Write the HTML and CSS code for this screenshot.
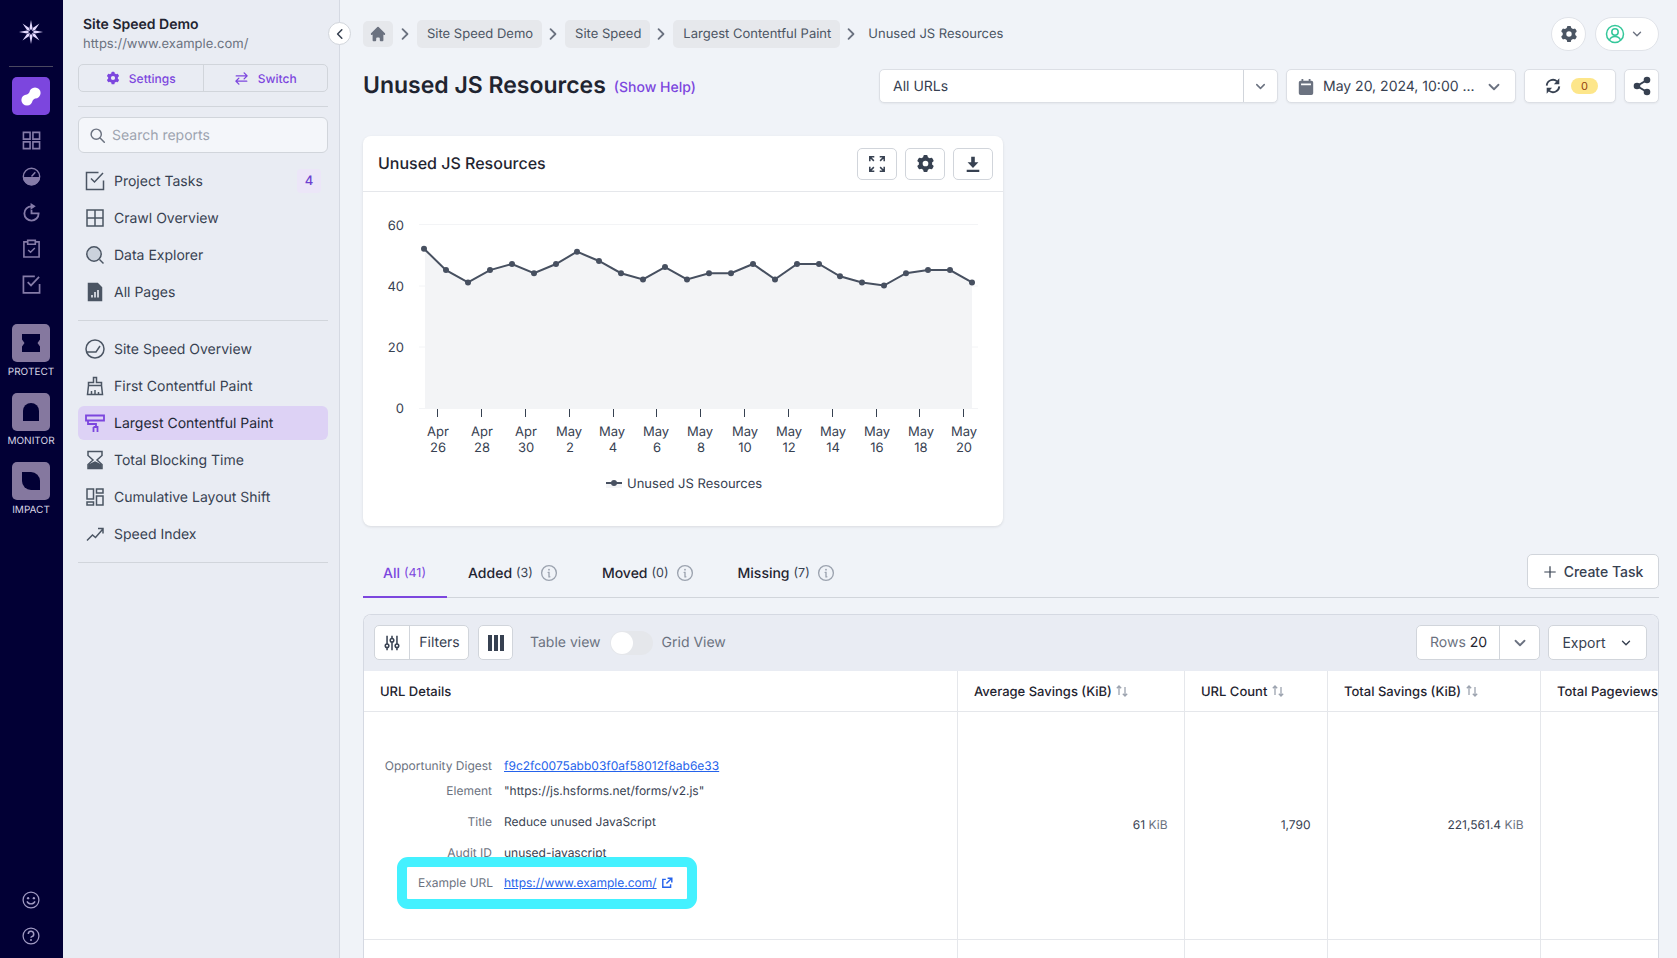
FILE: index.html
```html
<!DOCTYPE html>
<html>
<head>
  <title>Unused JS Resources</title>
  <meta name="viewport" content="width=device-width, initial-scale=1.0">
  <link rel="stylesheet" href="styles.css">
</head>
<body>
  <svg class="sprite" aria-hidden="true">
    <symbol id="i-gear" viewBox="0 0 20 20"><path fill="currentColor" fill-rule="evenodd" d="M7.84 1.804A1 1 0 018.82 1h2.36a1 1 0 01.98.804l.331 1.652a6.993 6.993 0 011.929 1.115l1.598-.54a1 1 0 011.186.447l1.18 2.044a1 1 0 01-.205 1.251l-1.267 1.113a7.047 7.047 0 010 2.228l1.267 1.113a1 1 0 01.206 1.25l-1.18 2.045a1 1 0 01-1.187.447l-1.598-.54a6.993 6.993 0 01-1.929 1.115l-.33 1.652a1 1 0 01-.98.804H8.82a1 1 0 01-.98-.804l-.331-1.652a6.993 6.993 0 01-1.929-1.115l-1.598.54a1 1 0 01-1.186-.447l-1.18-2.044a1 1 0 01.205-1.251l1.267-1.114a7.05 7.05 0 010-2.227L1.821 7.773a1 1 0 01-.206-1.25l1.18-2.045a1 1 0 011.187-.447l1.598.54A6.993 6.993 0 017.51 3.456l.33-1.652zM10 13a3 3 0 100-6 3 3 0 000 6z"/></symbol>
    <symbol id="i-chev-down" viewBox="0 0 20 20"><path fill="none" stroke="currentColor" stroke-width="2" stroke-linecap="round" stroke-linejoin="round" d="M5 7.5l5 5 5-5"/></symbol>
    <symbol id="i-chev-right" viewBox="0 0 20 20"><path fill="none" stroke="currentColor" stroke-width="2.6" stroke-linecap="round" stroke-linejoin="round" d="M6.5 3l7 7-7 7"/></symbol>
    <symbol id="i-info" viewBox="0 0 20 20"><circle cx="10" cy="10" r="8.2" fill="none" stroke="currentColor" stroke-width="1.5"/><circle cx="10" cy="6.3" r="1" fill="currentColor"/><path fill="none" stroke="currentColor" stroke-width="1.5" stroke-linecap="round" d="M9 9.3h1v5h1"/></symbol>
    <symbol id="i-sort" viewBox="0 0 14 14"><path fill="none" stroke="#9ca3af" stroke-width="1.3" d="M4 11V2M1.8 4.2L4 2l2.2 2.2"/><path fill="none" stroke="#9ca3af" stroke-width="1.3" d="M10 3v9M7.8 9.8L10 12l2.2-2.2"/></symbol>
  </svg>

  <nav class="rail">
    <svg class="rail-logo" viewBox="0 0 24 24" fill="#e4d8ff">
      <path d="M12 0l1.5 8L12 10.5 10.5 8z"/>
      <path d="M12 0l1.5 8L12 10.5 10.5 8z" transform="rotate(45 12 12)"/>
      <path d="M12 0l1.5 8L12 10.5 10.5 8z" transform="rotate(90 12 12)"/>
      <path d="M12 0l1.5 8L12 10.5 10.5 8z" transform="rotate(135 12 12)"/>
      <path d="M12 0l1.5 8L12 10.5 10.5 8z" transform="rotate(180 12 12)"/>
      <path d="M12 0l1.5 8L12 10.5 10.5 8z" transform="rotate(225 12 12)"/>
      <path d="M12 0l1.5 8L12 10.5 10.5 8z" transform="rotate(270 12 12)"/>
      <path d="M12 0l1.5 8L12 10.5 10.5 8z" transform="rotate(315 12 12)"/>
    </svg>
    <div class="rail-divider"></div>
    <div class="rail-active">
      <svg viewBox="0 0 38 38" width="38" height="38"><path d="M15 23l8-7" stroke="#fff" stroke-width="8" fill="none"/><circle cx="15" cy="23" r="5.6" fill="#fff"/><circle cx="23" cy="16" r="5.6" fill="#fff"/></svg>
    </div>
    <div class="rail-icons">
      <svg viewBox="0 0 20 20"><path fill="none" stroke="currentColor" stroke-width="1.7" d="M1.5 1.5h7v7h-7zM11.5 1.5h7v7h-7zM1.5 11.5h7v7h-7zM11.5 11.5h7v7h-7z"/></svg>
      <svg viewBox="0 0 20 20"><circle cx="10" cy="10" r="8.6" fill="none" stroke="currentColor" stroke-width="1.5"/><path fill="currentColor" d="M1 10.5h18a9 9 0 01-18 0z"/><path fill="none" stroke="currentColor" stroke-width="1.6" d="M10 10l4-4.5"/></svg>
      <svg viewBox="0 0 20 20"><path fill="none" stroke="currentColor" stroke-width="1.9" d="M10 3.500A7.500 7.500 0 1017.500 11H10V7"/><path fill="currentColor" d="M9 0l5.500 3.500L9 7z"/></svg>
      <svg viewBox="0 0 20 20"><path fill="none" stroke="currentColor" stroke-width="1.7" d="M6 3H2v16h16V3h-4M6 1.5h8v4H6z"/><path fill="none" stroke="currentColor" stroke-width="1.5" d="M6.5 11.5l2.5 2.5 4.5-4.5"/></svg>
      <svg viewBox="0 0 20 20"><path fill="none" stroke="currentColor" stroke-width="1.8" d="M18.5 9.5v9.4h-17V1.5h12"/><path fill="none" stroke="currentColor" stroke-width="1.8" d="M6 7.5l3.5 3.5 8.5-9"/></svg>
    </div>
    <div class="product">
      <div class="product-tile"><svg viewBox="0 0 20 20"><path d="M1 1h18v5.500L16.500 10l2.500 3.500V19H1v-5.500L3.500 10 1 6.500z"/></svg></div>
      <span>PROTECT</span>
    </div>
    <div class="product">
      <div class="product-tile"><svg viewBox="0 0 20 20"><path d="M2 19V9a8 8 0 0116 0v10z"/></svg></div>
      <span>MONITOR</span>
    </div>
    <div class="product">
      <div class="product-tile"><svg viewBox="0 0 20 20"><path d="M1 1h9a9 9 0 019 9v9h-9a9 9 0 01-9-9z"/></svg></div>
      <span>IMPACT</span>
    </div>
    <div class="rail-bottom">
      <svg viewBox="0 0 20 20"><circle cx="10" cy="10" r="8.800" fill="none" stroke="currentColor" stroke-width="1.400"/><circle cx="6.800" cy="8" r="1.300" fill="currentColor"/><circle cx="13.200" cy="8" r="1.300" fill="currentColor"/><path fill="none" stroke="currentColor" stroke-width="1.500" d="M5.500 11.500a5 5 0 009 0"/></svg>
      <svg viewBox="0 0 20 20"><circle cx="10" cy="10" r="8.800" fill="none" stroke="currentColor" stroke-width="1.400"/><path fill="none" stroke="currentColor" stroke-width="1.700" d="M7 7.800a3 3 0 113.800 2.900c-.6.200-.8.600-.8 1.300"/><circle cx="10" cy="14.500" r="1.100" fill="currentColor"/></svg>
    </div>
  </nav>

  <aside class="sidebar">
    <button class="collapse"><svg viewBox="0 0 20 20" width="12" height="12"><path fill="none" stroke="#374151" stroke-width="2.600" stroke-linecap="round" stroke-linejoin="round" d="M13 3l-7 7 7 7"/></svg></button>
    <div class="project">
      <div class="project-name">Site Speed Demo</div>
      <div class="project-url">https://www.example.com/</div>
    </div>
    <div class="side-actions">
      <a class="side-action"><svg width="14" height="14"><use href="#i-gear"/></svg>Settings</a>
      <a class="side-action"><svg viewBox="0 0 20 20" width="15" height="15"><path fill="none" stroke="currentColor" stroke-width="1.800" stroke-linecap="round" stroke-linejoin="round" d="M3 6.500h14M13.500 2.500l4 4-4 4M17 13.500H3M6.500 9.500l-4 4 4 4"/></svg>Switch</a>
    </div>
    <div class="side-divider first"></div>
    <div class="search">
      <svg viewBox="0 0 20 20" width="17" height="17"><circle cx="8.500" cy="8.500" r="6" fill="none" stroke="#6b7280" stroke-width="1.700"/><path stroke="#6b7280" stroke-width="1.800" stroke-linecap="round" d="M13 13l5 5"/></svg>
      <span>Search reports</span>
    </div>
    <ul class="nav-list">
      <li class="nav-item">
        <svg viewBox="0 0 20 20"><path d="M18.500 9.500v9h-17v-17h12M6 7.500l3.500 3.500 8.500-9"/></svg>
        Project Tasks<span class="badge">4</span>
      </li>
      <li class="nav-item">
        <svg viewBox="0 0 20 20"><path d="M2 2h16v16H2zM10 2v16M2 10h16"/></svg>
        Crawl Overview
      </li>
      <li class="nav-item">
        <svg viewBox="0 0 20 20"><circle cx="9" cy="9" r="7.200" fill="#cbd2dc"/><path d="M14.500 14.500l4 4"/></svg>
        Data Explorer
      </li>
      <li class="nav-item">
        <svg viewBox="0 0 20 20"><path class="solid" d="M3.500 1.500h9l4 4v13h-13z"/><path class="bars" d="M7 15.500v-2.500M10 15.500V10M13 15.500V8"/></svg>
        All Pages
      </li>
    </ul>
    <div class="side-divider"></div>
    <ul class="nav-list">
      <li class="nav-item">
        <svg viewBox="0 0 20 20"><circle cx="10" cy="10" r="9"/><path d="M1 13h10l4-6"/></svg>
        Site Speed Overview
      </li>
      <li class="nav-item">
        <svg viewBox="0 0 20 20"><path d="M8.500 1.500h3v5h5v3h-13v-3h5zM3.500 9.500h13l1 9h-15zM6.500 18v-3M10 18v-4M13.500 18v-2"/></svg>
        First Contentful Paint
      </li>
      <li class="nav-item active">
        <svg viewBox="0 0 20 20"><path d="M1 2.500h18v5H1zM3 7.500v3.500h8v3M8.500 14h4v5M8.500 14v5"/></svg>
        Largest Contentful Paint
      </li>
      <li class="nav-item">
        <svg viewBox="0 0 20 20"><path d="M3 1.500h14v4L12 10l5 4.500v4H3v-4L8 10 3 5.500z"/><path class="solid" d="M4 17.500v-2.500l6-3 6 3v2.500z"/></svg>
        Total Blocking Time
      </li>
      <li class="nav-item">
        <svg viewBox="0 0 20 20"><path d="M2 2h6.500v10H2zM11.500 2H18v4h-6.500zM11.500 9H18v9h-6.500zM2 15h6.500v3H2z"/></svg>
        Cumulative Layout Shift
      </li>
      <li class="nav-item">
        <svg viewBox="0 0 20 20"><path d="M2 16.500l5.500-5.500 3 2.500 7-8M13 4.500h5v5"/></svg>
        Speed Index
      </li>
    </ul>
    <div class="side-divider"></div>
  </aside>

  <main class="main">
    <header class="topbar">
      <div class="crumbs">
        <a class="crumb home"><svg viewBox="0 0 20 20" width="18" height="18"><path fill="#6b7280" d="M10.707 2.293a1 1 0 00-1.414 0l-7 7a1 1 0 001.414 1.414L4 10.414V17a1 1 0 001 1h2a1 1 0 001-1v-2a1 1 0 011-1h2a1 1 0 011 1v2a1 1 0 001 1h2a1 1 0 001-1v-6.586l.293.293a1 1 0 001.414-1.414l-7-7z"/></svg></a>
        <svg class="crumb-sep"><use href="#i-chev-right"/></svg>
        <a class="crumb">Site Speed Demo</a>
        <svg class="crumb-sep"><use href="#i-chev-right"/></svg>
        <a class="crumb">Site Speed</a>
        <svg class="crumb-sep"><use href="#i-chev-right"/></svg>
        <a class="crumb">Largest Contentful Paint</a>
        <svg class="crumb-sep"><use href="#i-chev-right"/></svg>
        <span class="crumb-last">Unused JS Resources</span>
      </div>
      <div class="top-actions">
        <button class="round-btn"><svg width="18" height="18"><use href="#i-gear"/></svg></button>
        <button class="round-btn user">
          <svg viewBox="0 0 20 20" width="20" height="20" fill="none" stroke="#34c79a" stroke-width="1.500"><circle cx="10" cy="10" r="8.500"/><circle cx="10" cy="8" r="3.200"/><path d="M4.500 16c1-2.500 3-3.500 5.500-3.500s4.500 1 5.500 3.500"/></svg>
          <svg class="user-chev" width="14" height="14"><use href="#i-chev-down"/></svg>
        </button>
      </div>
    </header>

    <div class="page-head">
      <div class="page-title">
        <h1>Unused JS Resources</h1>
        <a class="help-link">(Show Help)</a>
      </div>
      <div class="page-controls">
        <div class="control url-select">
          <span class="url-value">All URLs</span>
          <span class="url-caret"><svg width="15" height="15"><use href="#i-chev-down"/></svg></span>
        </div>
        <div class="control date-select">
          <svg viewBox="0 0 20 20" width="18" height="18"><path fill="#6b7280" d="M5 1h2v2h6V1h2v2h1a2 2 0 012 2v12a2 2 0 01-2 2H4a2 2 0 01-2-2V5a2 2 0 012-2h1zM4.500 6v2h11V6z"/></svg>
          <span class="date-value">May 20, 2024, 10:00 ...</span>
          <svg class="date-caret" width="18" height="18"><use href="#i-chev-down"/></svg>
        </div>
        <div class="control refresh">
          <svg viewBox="0 0 20 20" width="18" height="18" fill="none" stroke="#374151" stroke-width="2"><path d="M3 9.500a7 7 0 0111.500-4.700M17 10.500a7 7 0 01-11.500 4.700"/><path fill="#374151" stroke="none" d="M17 1.500V8h-6zM3 18.500V12h6z"/></svg>
          <span class="count">0</span>
        </div>
        <div class="control share">
          <svg viewBox="0 0 20 20" width="20" height="20"><path fill="none" stroke="#374151" stroke-width="2" d="M15 4L5 10l10 6"/><circle cx="15" cy="4" r="3.300" fill="#374151"/><circle cx="5" cy="10" r="3.300" fill="#374151"/><circle cx="15" cy="16" r="3.300" fill="#374151"/></svg>
        </div>
      </div>
    </div>

    <section class="card">
      <div class="card-head">
        <h2>Unused JS Resources</h2>
        <div class="card-tools">
          <button class="tool-btn"><svg viewBox="0 0 20 20" width="18" height="18" fill="none" stroke="#374151" stroke-width="1.700"><path d="M2 7V2h5M18 7V2h-5M2 13v5h5M18 13v5h-5M2 2l4.500 4.500M18 2l-4.500 4.500M2 18l4.500-4.500M18 18l-4.500-4.500"/></svg></button>
          <button class="tool-btn"><svg width="19" height="19"><use href="#i-gear"/></svg></button>
          <button class="tool-btn"><svg viewBox="0 0 20 20" width="18" height="18" fill="#374151"><path d="M8 2h4v6h4l-6 6.500L4 8h4zM3 16.500h14V19H3z"/></svg></button>
        </div>
      </div>
      <svg class="chart" viewBox="363 192 640 334" width="640" height="334">
        <defs>
          <marker id="dot" markerUnits="userSpaceOnUse" markerWidth="8" markerHeight="8" refX="4" refY="4"><circle cx="4" cy="4" r="3" fill="#475060"/></marker>
        </defs>
        <path class="grid-line" d="M419 224.500H978M419 286H978M419 347H978M419 408.500H978"/>
        <polygon class="area" points="425,408 425,248.700 446,270.100 468,282.400 490,270.100 512,264 534,273.200 556,264 577,251.700 599,261 621,273.200 643,279.400 665,267.100 687,279.400 709,273.200 731,273.200 753,264 775,279.400 797,264 819,264 840,276.300 862,282.400 884,285.500 906,273.200 928,270.100 950,270.100 972,282.400 972,408"/>
        <polyline class="line" marker-start="url(#dot)" marker-mid="url(#dot)" marker-end="url(#dot)" points="424,248.700 446,270.100 468,282.400 490,270.100 512,264 534,273.200 556,264 577,251.700 599,261 621,273.200 643,279.400 665,267.100 687,279.400 709,273.200 731,273.200 753,264 775,279.400 797,264 819,264 840,276.300 862,282.400 884,285.500 906,273.200 928,270.100 950,270.100 972,282.400"/>
        <path class="tick" d="M437.500 409v8M481.500 409v8M525.500 409v8M569.500 409v8M613.500 409v8M656.500 409v8M700.500 409v8M744.500 409v8M788.500 409v8M832.500 409v8M876.500 409v8M919.500 409v8M963.500 409v8"/>
        <g class="y-labels">
          <text x="404" y="229.500">60</text>
          <text x="404" y="291">40</text>
          <text x="404" y="352">20</text>
          <text x="404" y="413">0</text>
        </g>
        <g class="x-labels">
          <text x="438" y="435.500">Apr</text><text x="438" y="451.500">26</text>
          <text x="482" y="435.500">Apr</text><text x="482" y="451.500">28</text>
          <text x="526" y="435.500">Apr</text><text x="526" y="451.500">30</text>
          <text x="569" y="435.500">May</text><text x="570" y="451.500">2</text>
          <text x="612" y="435.500">May</text><text x="613" y="451.500">4</text>
          <text x="656" y="435.500">May</text><text x="657" y="451.500">6</text>
          <text x="700" y="435.500">May</text><text x="701" y="451.500">8</text>
          <text x="745" y="435.500">May</text><text x="745" y="451.500">10</text>
          <text x="789" y="435.500">May</text><text x="789" y="451.500">12</text>
          <text x="833" y="435.500">May</text><text x="833" y="451.500">14</text>
          <text x="877" y="435.500">May</text><text x="877" y="451.500">16</text>
          <text x="921" y="435.500">May</text><text x="921" y="451.500">18</text>
          <text x="964" y="435.500">May</text><text x="964" y="451.500">20</text>
        </g>
        <rect class="area" x="606" y="483" width="16" height="5"/>
        <path class="line" d="M606 483h16"/>
        <circle cx="614" cy="483" r="3" fill="#475060"/>
        <text class="legend" x="627" y="488">Unused JS Resources</text>
      </svg>
    </section>

    <div class="tabs-row">
      <div class="tabs">
        <a class="tab active">All <small>(41)</small></a>
        <a class="tab">Added <small>(3)</small><svg class="tab-info"><use href="#i-info"/></svg></a>
        <a class="tab">Moved <small>(0)</small><svg class="tab-info"><use href="#i-info"/></svg></a>
        <a class="tab">Missing <small>(7)</small><svg class="tab-info"><use href="#i-info"/></svg></a>
      </div>
      <button class="create-task"><svg viewBox="0 0 16 16" width="14" height="14"><path stroke="#374151" stroke-width="1.400" d="M8 1.500v13M1.500 8h13"/></svg>Create Task</button>
    </div>

    <section class="panel">
      <div class="toolbar">
        <div class="btn-group filters">
          <span class="group-icon"><svg viewBox="0 0 20 20" width="18" height="18" fill="none" stroke="#374151" stroke-width="1.700"><path d="M4.500 2v16M10 2v16M15.500 2v16"/><circle cx="4.500" cy="13" r="2" fill="#fff"/><circle cx="10" cy="7" r="2" fill="#fff"/><circle cx="15.500" cy="13" r="2" fill="#fff"/></svg></span>
          <span class="group-label">Filters</span>
        </div>
        <button class="col-btn"><svg viewBox="0 0 16 16" width="16" height="16" fill="#374151"><path d="M0 0h4v16H0zM6 0h4v16H6zM12 0h4v16h-4z"/></svg></button>
        <span class="view-label">Table view</span>
        <span class="toggle"><span class="knob"></span></span>
        <span class="view-label">Grid View</span>
        <div class="toolbar-right">
          <div class="btn-group rows">
            <span class="rows-label">Rows <b>20</b></span>
            <span class="rows-caret"><svg width="18" height="18"><use href="#i-chev-down"/></svg></span>
          </div>
          <button class="export">Export<svg width="14" height="14"><use href="#i-chev-down"/></svg></button>
        </div>
      </div>
      <table class="data-table">
        <colgroup>
          <col class="col-url"><col class="col-avg"><col class="col-count"><col class="col-total"><col class="col-views">
        </colgroup>
        <thead>
          <tr>
            <th>URL Details</th>
            <th>Average Savings (KiB) <svg class="sort"><use href="#i-sort"/></svg></th>
            <th>URL Count <svg class="sort"><use href="#i-sort"/></svg></th>
            <th>Total Savings (KiB) <svg class="sort"><use href="#i-sort"/></svg></th>
            <th>Total Pageviews</th>
          </tr>
        </thead>
        <tbody>
          <tr class="detail-row">
            <td>
              <dl class="details">
                <dt>Opportunity Digest</dt><dd><a>f9c2fc0075abb03f0af58012f8ab6e33</a></dd>
                <dt>Element</dt><dd>"https://js.hsforms.net/forms/v2.js"</dd>
                <dt>Title</dt><dd>Reduce unused JavaScript</dd>
                <dt>Audit ID</dt><dd>unused-javascript</dd>
              </dl>
              <div class="highlight">
                <span class="hl-label">Example URL</span>
                <a>https://www.example.com/</a>
                <svg viewBox="0 0 20 20" width="12" height="12" fill="none" stroke="#2563eb" stroke-width="2.400"><path d="M8 4H3v13h13v-5M11 2h7v7M18 2L9 11"/></svg>
              </div>
            </td>
            <td class="num">61 <small>KiB</small></td>
            <td class="num">1,790</td>
            <td class="num">221,561.4 <small>KiB</small></td>
            <td></td>
          </tr>
          <tr class="next-row"><td></td><td></td><td></td><td></td><td></td></tr>
        </tbody>
      </table>
    </section>
  </main>
</body>
</html>
```

FILE: styles.css
```css
* {
  box-sizing: border-box;
}

html, body {
  height: 100%;
}

body {
  margin: 0;
  display: flex;
  overflow: hidden;
  font-family: Inter, "Noto Sans", sans-serif;
  font-size: 14px;
  color: #374151;
  background-color: #f0f3f8;
  text-rendering: geometricPrecision;
}

button {
  font-family: inherit;
  padding: 0;
  cursor: pointer;
}

ul {
  list-style: none;
  margin: 0;
  padding: 0;
}

.sprite {
  position: absolute;
  width: 0;
  height: 0;
}

/* Far left rail */
.rail {
  flex: 0 0 63px;
  display: flex;
  flex-direction: column;
  align-items: center;
  background-color: #020035;
  color: #857ba8;
  padding: 20px 1px 0 0;
}

.rail-logo {
  width: 24px;
  height: 24px;
}

.rail-divider {
  width: 44px;
  height: 1px;
  background-color: #4a4860;
  margin-top: 22px;
}

.rail-active {
  width: 38px;
  height: 38px;
  margin-top: 10px;
  border-radius: 5px;
  background-color: #7c46de;
}

.rail-icons {
  display: flex;
  flex-direction: column;
  gap: 17px;
  margin-top: 16px;
  margin-bottom: 23px;
}

.rail-icons svg {
  display: block;
  width: 19px;
  height: 19px;
}

.product {
  display: flex;
  flex-direction: column;
  align-items: center;
  gap: 4px;
  margin-top: 7px;
  margin-bottom: 7px;
  color: #d6d4e4;
  font-size: 10px;
  line-height: 13px;
}

.product-tile {
  display: flex;
  align-items: center;
  justify-content: center;
  width: 38px;
  height: 38px;
  border-radius: 5px;
  background-color: #85789f;
}

.product-tile svg {
  width: 20px;
  height: 20px;
  fill: #020035;
}

.rail-bottom {
  display: flex;
  flex-direction: column;
  gap: 18px;
  margin-top: auto;
  margin-bottom: 13px;
  color: #a29bc4;
}

.rail-bottom svg {
  display: block;
  width: 18px;
  height: 18px;
}

/* Project sidebar */
.sidebar {
  position: relative;
  flex: 0 0 277px;
  padding: 15px 11px 0 15px;
  background-color: #e9ecf3;
  border-right: 1px solid #d5d9e2;
}

.collapse {
  position: absolute;
  top: 22px;
  right: -12px;
  z-index: 2;
  display: flex;
  align-items: center;
  justify-content: center;
  width: 23px;
  height: 23px;
  border-radius: 50%;
  border: 1px solid #d1d5db;
  background-color: #fff;
}

.project {
  padding-left: 5px;
}

.project-name {
  font-size: 14px;
  line-height: 20px;
  font-weight: 600;
  color: #1f2430;
}

.project-url {
  font-size: 13px;
  line-height: 19px;
  color: #6b7280;
}

.side-actions {
  display: flex;
  height: 28px;
  margin-top: 10px;
  border: 1px solid #d1d5db;
  border-radius: 5px;
}

.side-action {
  flex: 1;
  display: flex;
  align-items: center;
  justify-content: center;
  gap: 9px;
  font-size: 12px;
  font-weight: 500;
  color: #7c46de;
}

.side-action + .side-action {
  border-left: 1px solid #d1d5db;
}

.side-divider {
  height: 1px;
  background-color: #d1d5db;
  margin: 11px 0 11px;
}

.side-divider.first {
  margin: 14px 0 10px;
}

.search {
  display: flex;
  align-items: center;
  gap: 6px;
  height: 36px;
  padding-left: 10px;
  margin-bottom: 11px;
  border: 1px solid #d1d5db;
  border-radius: 6px;
  background-color: #f4f6fa;
  color: #9ca3af;
}

.nav-item {
  position: relative;
  display: flex;
  align-items: center;
  height: 34px;
  margin-bottom: 3px;
  padding-left: 7px;
  border-radius: 6px;
  color: #374151;
}

.nav-item svg {
  flex: none;
  width: 20px;
  height: 20px;
  margin-right: 9px;
  fill: none;
  stroke: #4b5563;
  stroke-width: 1.5;
}

.nav-item svg .solid {
  fill: #4b5563;
}

.nav-item svg .bars {
  stroke: #e9ecf3;
  stroke-width: 1.6;
}

.nav-item.active {
  background-color: #ddd2f5;
  color: #1f2937;
}

.nav-item.active svg {
  stroke: #7c46de;
  stroke-width: 1.8;
}

.badge {
  position: absolute;
  top: 5px;
  right: 7px;
  width: 24px;
  height: 24px;
  line-height: 24px;
  text-align: center;
  border-radius: 4px;
  background-color: #ece6f8;
  color: #6d3fd0;
  font-size: 13px;
  font-weight: 500;
}

/* Main area */
.main {
  flex: 1;
  min-width: 0;
  padding: 17px 18px 0 23px;
}

.topbar {
  display: flex;
  align-items: center;
  justify-content: space-between;
  height: 34px;
}

.crumbs {
  display: flex;
  align-items: center;
}

.crumb {
  display: flex;
  align-items: center;
  height: 28px;
  padding: 0 9px 0 10px;
  border-radius: 5px;
  background-color: #e6e8ec;
  font-size: 13px;
  color: #4b5563;
}

.crumb.home {
  padding: 0 6px;
  height: 26px;
}

.crumb-sep {
  width: 14px;
  height: 14px;
  margin: 0 5px;
  color: #6b7280;
}

.crumb:not(.home) + .crumb-sep {
  margin-left: 4px;
}

.crumb-last {
  margin-left: 5px;
  font-size: 13px;
  color: #4b5563;
}

.top-actions {
  display: flex;
  gap: 9px;
}

.round-btn {
  display: flex;
  align-items: center;
  justify-content: center;
  width: 35px;
  height: 34px;
  border-radius: 17px;
  border: 1px solid #e0e3e9;
  background-color: #fff;
  color: #4b5563;
}

.round-btn.user {
  width: 64px;
  gap: 5px;
  justify-content: flex-start;
  padding-left: 9px;
}

.user-chev {
  color: #6b7280;
}

.page-head {
  display: flex;
  align-items: center;
  justify-content: space-between;
  margin-top: 18px;
  height: 34px;
}

.page-title {
  display: flex;
  align-items: center;
  gap: 8px;
}

h1 {
  margin: 0 0 2px;
  font-size: 23px;
  font-weight: 600;
  color: #1f2430;
}

.help-link {
  font-size: 14px;
  font-weight: 500;
  color: #7c46de;
  margin-top: 2px;
}

.page-controls {
  display: flex;
  gap: 8px;
}

.control {
  display: flex;
  align-items: center;
  height: 34px;
  border: 1px solid #dcdfe5;
  border-radius: 5px;
  background-color: #fff;
  box-shadow: 0 1px 2px rgba(0, 0, 0, 0.05);
}

.url-select {
  width: 399px;
}

.url-value {
  flex: 1;
  padding: 1px 0 0 13px;
  font-size: 14px;
  color: #374151;
}

.url-caret {
  display: flex;
  align-items: center;
  justify-content: center;
  width: 34px;
  height: 100%;
  border-left: 1px solid #d1d5db;
  color: #6b7280;
}

.date-select {
  width: 230px;
  padding: 1px 0 0 10px;
}

.date-value {
  margin-left: 8px;
  font-size: 14px;
  color: #374151;
  white-space: nowrap;
}

.date-caret {
  margin-left: 10px;
  color: #6b7280;
}

.refresh {
  width: 92px;
  padding-left: 19px;
  gap: 9px;
}

.count {
  width: 27px;
  height: 16px;
  line-height: 16px;
  text-align: center;
  border-radius: 8px;
  background-color: #fde68a;
  color: #92400e;
  font-size: 11px;
}

.share {
  width: 35px;
  justify-content: center;
}

/* Chart card */
.card {
  width: 640px;
  height: 390px;
  margin-top: 33px;
  border-radius: 8px;
  background-color: #fff;
  box-shadow: 0 1px 3px rgba(0, 0, 0, 0.1);
}

.card-head {
  display: flex;
  align-items: center;
  justify-content: space-between;
  height: 56px;
  padding: 0 10px 0 15px;
  border-bottom: 1px solid #e5e7eb;
}

h2 {
  margin: 0 0 2px;
  font-size: 16px;
  font-weight: 500;
  color: #1f2430;
}

.card-tools {
  display: flex;
  gap: 8px;
}

.tool-btn {
  display: flex;
  align-items: center;
  justify-content: center;
  width: 40px;
  height: 32px;
  border: 1px solid #d1d5db;
  border-radius: 5px;
  background-color: #fff;
  color: #374151;
}

.chart {
  display: block;
}

.chart text {
  font-size: 13px;
  fill: #374151;
}

.grid-line {
  stroke: #f3f4f6;
  fill: none;
}

.area {
  fill: #f3f4f6;
}

.line {
  fill: none;
  stroke: #475060;
  stroke-width: 2;
}

.tick {
  stroke: #374151;
  fill: none;
}

.y-labels text {
  text-anchor: end;
}

.x-labels text {
  text-anchor: middle;
}

/* Tabs */
.tabs-row {
  display: flex;
  align-items: flex-end;
  justify-content: space-between;
  height: 72px;
  border-bottom: 1px solid #d1d5db;
  padding-bottom: 8px;
}

.tabs {
  display: flex;
  gap: 4px;
  height: 52px;
  margin-bottom: -9px;
}

.tab {
  display: flex;
  align-items: center;
  gap: 4px;
  padding: 4px 20px 0;
  font-size: 14px;
  font-weight: 500;
  color: #1f2430;
  border-bottom: 2px solid transparent;
}

.tab small {
  font-size: 12.5px;
  font-weight: 400;
  color: #374151;
}

.tab.active {
  padding-right: 21px;
  margin-right: -3px;
  color: #7c46de;
  border-bottom-color: #7c46de;
}

.tab.active small {
  color: #7c46de;
}

.tab-info {
  width: 18px;
  height: 18px;
  margin-left: 3px;
  color: #9ca3af;
}

.create-task {
  display: flex;
  align-items: center;
  justify-content: center;
  gap: 7px;
  width: 132px;
  height: 35px;
  border: 1px solid #d1d5db;
  border-radius: 5px;
  background-color: #fff;
  font-size: 14px;
  font-weight: 500;
  color: #374151;
}

/* Table panel */
.panel {
  margin-top: 16px;
  border: 1px solid #d5d9e2;
  border-bottom: none;
  border-radius: 8px 8px 0 0;
  overflow: hidden;
  background-color: #fff;
}

.toolbar {
  display: flex;
  align-items: center;
  height: 56px;
  padding: 0 11px 1px 10px;
  background-color: #e9ecf3;
}

.btn-group {
  display: flex;
  align-items: center;
  height: 35px;
  border: 1px solid #d1d5db;
  border-radius: 5px;
  background-color: #fff;
}

.filters {
  width: 95px;
}

.group-icon {
  display: flex;
  align-items: center;
  justify-content: center;
  width: 35px;
  height: 100%;
  border-right: 1px solid #d1d5db;
}

.group-label {
  flex: 1;
  padding-left: 1px;
  text-align: center;
  color: #374151;
}

.col-btn {
  display: flex;
  align-items: center;
  justify-content: center;
  width: 35px;
  height: 35px;
  margin-left: 9px;
  margin-right: 17px;
  border: 1px solid #d1d5db;
  border-radius: 5px;
  background-color: #fff;
}

.view-label {
  color: #6b7280;
}

.toggle {
  display: flex;
  align-items: center;
  width: 43px;
  height: 24px;
  margin: 0 9px;
  padding-left: 1px;
  border-radius: 12px;
  background-color: #e5e7eb;
}

.knob {
  width: 22px;
  height: 22px;
  border-radius: 50%;
  background-color: #fff;
}

.toolbar-right {
  display: flex;
  gap: 8px;
  margin-left: auto;
}

.rows {
  width: 124px;
}

.rows-label {
  flex: 1;
  padding-left: 13px;
  color: #6b7280;
}

.rows-label b {
  font-weight: 400;
  color: #1f2430;
}

.rows-caret {
  display: flex;
  align-items: center;
  justify-content: center;
  width: 40px;
  height: 100%;
  border-left: 1px solid #d1d5db;
  color: #6b7280;
}

.export {
  display: flex;
  align-items: center;
  justify-content: center;
  gap: 13px;
  width: 99px;
  height: 35px;
  border: 1px solid #d1d5db;
  border-radius: 5px;
  background-color: #fff;
  font-size: 14px;
  color: #374151;
}

.data-table {
  table-layout: fixed;
  border-collapse: collapse;
  width: 1358px;
}

.col-url { width: 593px; }
.col-avg { width: 227px; }
.col-count { width: 143px; }
.col-total { width: 213px; }
.col-views { width: 182px; }

.data-table th {
  height: 40px;
  padding: 2px 16px 0;
  text-align: left;
  font-size: 13px;
  font-weight: 500;
  color: #1f2430;
  white-space: nowrap;
  border-right: 1px solid #e5e7eb;
  border-bottom: 1px solid #e5e7eb;
}

.data-table th + th {
  padding-left: 16.5px;
}

.data-table td {
  padding: 0 16px;
  border-right: 1px solid #e5e7eb;
  border-bottom: 1px solid #e5e7eb;
  font-size: 12px;
  color: #374151;
}

.data-table td.num {
  padding-bottom: 2px;
}

.data-table th:last-child,
.data-table td:last-child {
  border-right: none;
}

.sort {
  width: 14px;
  height: 14px;
  vertical-align: -2px;
}

.detail-row {
  height: 228px;
}

.detail-row td:first-child {
  position: relative;
}

.next-row {
  height: 100px;
}

.num {
  text-align: right;
}

.num small {
  font-size: 12px;
  color: #6b7280;
}

.details {
  display: grid;
  grid-template-columns: 112px 1fr;
  grid-template-rows: 20px 31px 31px 31px;
  column-gap: 12px;
  align-items: center;
  margin: 0;
  padding-bottom: 27px;
}

.details dt {
  text-align: right;
  color: #6b7280;
}

.details dd {
  margin: 0;
  white-space: nowrap;
}

.details a,
.highlight a {
  color: #2563eb;
  text-decoration: underline;
}

/* Cyan callout over the row */
.highlight {
  position: absolute;
  left: 33px;
  top: 145px;
  display: flex;
  align-items: center;
  width: 300px;
  height: 52px;
  padding-left: 11px;
  border: 10px solid #44f1ff;
  border-radius: 11px;
  background-color: #fff;
  font-size: 12px;
}

.hl-label {
  width: 75px;
  margin-right: 11px;
  text-align: right;
  color: #6b7280;
  white-space: nowrap;
}

.highlight svg {
  margin-left: 4px;
}
```
